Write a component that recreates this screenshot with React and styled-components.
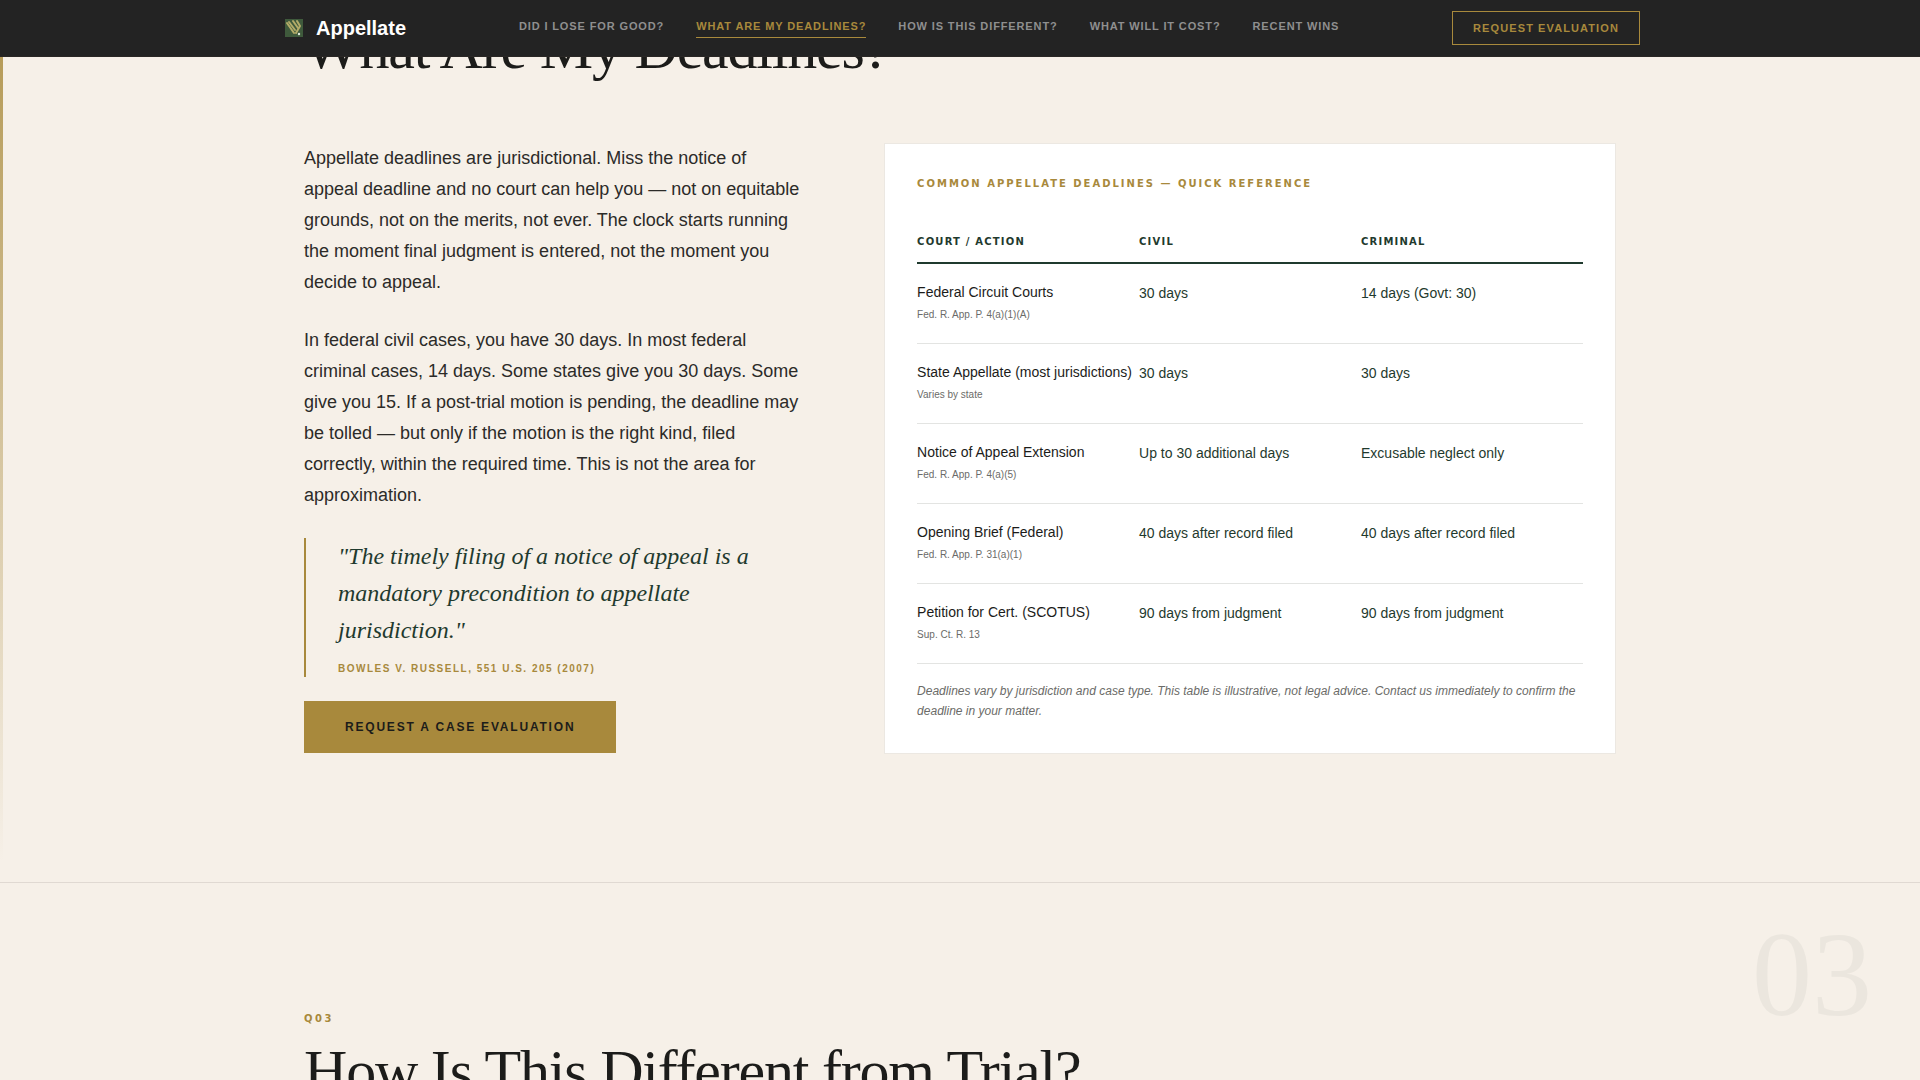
import React from "react";
import styled, { createGlobalStyle } from "styled-components";

const sans = `"Liberation Sans", Arial, sans-serif`,
	serif = `"Liberation Serif", "Times New Roman", serif`,
	label = `"DejaVu Sans", sans-serif`;

const GlobalStyle = createGlobalStyle`
	:root {
		--c_ink: #1c1c1a;
		--c_green: #1f3a2e;
		--c_gold: #a8893c;
		--c_cream: #f6f0e8;
		--c_muted: #6b6b68;
		--c_line: #e3e4e2;
	}
	* {
		box-sizing: border-box;
	}
	body {
		margin: 0;
		background-color: var(--c_cream);
		color: var(--c_ink);
		font-family: ${sans};
	}
	h2, h3, p, blockquote {
		margin: 0;
	}
	a {
		text-decoration: none;
	}
`;

const Page = styled.div`
		height: 100vh;
		overflow: hidden;
	`,
	Header = styled.header`
		position: fixed;
		top: 0;
		left: 0;
		right: 0;
		z-index: 10;
		background-color: #232323;
		border-bottom: 1px solid #2a2725;
	`,
	HeaderInner = styled.div`
		max-width: 1360px;
		height: 56px;
		margin: 0 auto;
		display: flex;
		align-items: center;
		justify-content: space-between;
	`,
	Brand = styled.a`
		display: flex;
		align-items: center;
		gap: 8px;
		color: #fff;
		font-size: 20px;
		font-weight: 700;
		svg {
			width: 28px;
			height: 28px;
		}
	`,
	Nav = styled.nav`
		display: flex;
		gap: 32px;
	`,
	NavLink = styled.a`
		color: ${({ $active }) => ($active ? "var(--c_gold)" : "#8f8f8f")};
		border-bottom: 1px solid ${({ $active }) => ($active ? "var(--c_gold)" : "transparent")};
		font-size: 11px;
		line-height: 16px;
		font-weight: 700;
		letter-spacing: 0.08em;
		text-transform: uppercase;
		padding-bottom: 3px;
	`,
	HeaderButton = styled.button`
		height: 34px;
		padding: 0 20px;
		border: 1px solid var(--c_gold);
		background: none;
		color: var(--c_gold);
		font-family: ${sans};
		font-size: 11px;
		font-weight: 700;
		letter-spacing: 0.1em;
		text-transform: uppercase;
	`,
	Section = styled.section`
		position: relative;
		border-bottom: 1px solid #e0d9d2;
	`,
	/* gold thread down the left edge of the section being read */
	Thread = styled.div`
		position: absolute;
		left: 0;
		top: 0;
		bottom: 20px;
		width: 3px;
		background: linear-gradient(to bottom, #b2964f, transparent);
	`,
	Numeral = styled.span`
		position: absolute;
		top: 24px;
		right: 48px;
		color: #ebe6de;
		font-family: ${serif};
		font-size: 120px;
		line-height: 136px;
	`,
	Container = styled.div`
		max-width: 1312px;
		margin: 0 auto;
		padding-top: ${({ $top }) => $top}px;
		padding-bottom: 128px;
	`,
	Kicker = styled.p`
		color: var(--c_gold);
		font-family: ${label};
		font-size: 10px;
		line-height: 16px;
		font-weight: 700;
		letter-spacing: 0.25em;
		margin-bottom: 12px;
	`,
	Title = styled.h2`
		font-family: ${serif};
		font-size: 60px;
		line-height: 64px;
		font-weight: 400;
		letter-spacing: -0.02em;
	`,
	Columns = styled.div`
		display: grid;
		grid-template-columns: minmax(0, 41fr) minmax(0, 60fr);
		gap: 80px;
		margin-top: 63px;
		align-items: start;
	`,
	Copy = styled.div`
		display: flex;
		flex-direction: column;
		align-items: flex-start;
	`,
	Paragraph = styled.p`
		font-size: 18px;
		line-height: 31px;
		color: #2c2b28;
		margin-bottom: 27px;
	`,
	Quote = styled.blockquote`
		align-self: stretch;
		border-left: 2px solid var(--c_gold);
		padding-left: 32px;
		margin-bottom: 24px;
		p {
			color: var(--c_green);
			font-family: ${serif};
			font-size: 24px;
			line-height: 37px;
			font-style: italic;
		}
		cite {
			display: block;
			margin-top: 12px;
			color: var(--c_gold);
			font-size: 10px;
			line-height: 16px;
			font-weight: 700;
			font-style: normal;
			letter-spacing: 0.15em;
			text-transform: uppercase;
		}
	`,
	PrimaryButton = styled.button`
		height: 52px;
		padding: 0 40px;
		border: 1px solid var(--c_gold);
		background-color: var(--c_gold);
		color: var(--c_ink);
		font-family: ${sans};
		font-size: 12px;
		font-weight: 700;
		letter-spacing: 0.15em;
		text-transform: uppercase;
	`,
	Card = styled.div`
		background-color: #fff;
		border: 1px solid #ece8e2;
		padding: 32px;
	`,
	CardTitle = styled.h3`
		color: var(--c_gold);
		font-family: ${label};
		font-size: 10px;
		line-height: 16px;
		font-weight: 700;
		letter-spacing: 0.2em;
		text-transform: uppercase;
		margin-bottom: 30px;
	`,
	Table = styled.table`
		width: 100%;
		table-layout: fixed;
		border-collapse: collapse;
		text-align: left;
	`,
	HeadCell = styled.th`
		padding: 12px 0;
		border-bottom: 2px solid var(--c_green);
		color: var(--c_green);
		font-family: ${label};
		font-size: 10px;
		line-height: 16px;
		letter-spacing: 0.12em;
		text-transform: uppercase;
	`,
	Cell = styled.td`
		height: 80px;
		padding: 18px 0 0;
		vertical-align: top;
		border-bottom: 1px solid var(--c_line);
		color: var(--c_green);
		font-size: 14px;
		line-height: 22px;
	`,
	ActionCell = styled(Cell)`
		color: var(--c_ink);
		line-height: 20px;
		white-space: nowrap;
		small {
			display: block;
			margin-top: 5px;
			color: var(--c_muted);
			font-size: 10px;
			line-height: 16px;
		}
	`,
	Note = styled.p`
		margin-top: 17px;
		color: var(--c_muted);
		font-size: 12px;
		line-height: 20px;
		font-style: italic;
	`;

const links = [
	{ name: "Did I lose for good?", url: "#q01" },
	{ name: "What are my deadlines?", url: "#q02" },
	{ name: "How is this different?", url: "#q03" },
	{ name: "What will it cost?", url: "#q04" },
	{ name: "Recent wins", url: "#wins" },
];

const deadlines = [
	{ action: "Federal Circuit Courts", rule: "Fed. R. App. P. 4(a)(1)(A)", civil: "30 days", criminal: "14 days (Govt: 30)" },
	{ action: "State Appellate (most jurisdictions)", rule: "Varies by state", civil: "30 days", criminal: "30 days" },
	{ action: "Notice of Appeal Extension", rule: "Fed. R. App. P. 4(a)(5)", civil: "Up to 30 additional days", criminal: "Excusable neglect only" },
	{ action: "Opening Brief (Federal)", rule: "Fed. R. App. P. 31(a)(1)", civil: "40 days after record filed", criminal: "40 days after record filed" },
	{ action: "Petition for Cert. (SCOTUS)", rule: "Sup. Ct. R. 13", civil: "90 days from judgment", criminal: "90 days from judgment" },
];

const Logo = () => (
	<svg viewBox="0 0 28 28" aria-hidden="true">
		<rect x="5" y="5" width="18" height="18" fill="#3f5a3c" />
		<g fill="none" stroke="#b3ab68" strokeWidth="2" strokeLinecap="round" strokeLinejoin="round">
			<path d="M7 9l7 10" />
			<path d="M9 8l6 8" />
			<path d="M13 7l5 7" />
			<path d="M17 7l3 5-4 7" />
		</g>
		<circle cx="19" cy="20" r="1.2" fill="#dfe8da" />
	</svg>
);

const App = () => {
	return (
		<Page>
			<GlobalStyle />
			<Header>
				<HeaderInner>
					<Brand href="#top">
						<Logo />
						Appellate
					</Brand>
					<Nav>
						{links.map(({ name, url }) => (
							<NavLink key={url} href={url} $active={url === "#q02"}>
								{name}
							</NavLink>
						))}
					</Nav>
					<HeaderButton type="button">Request Evaluation</HeaderButton>
				</HeaderInner>
			</Header>

			<Section id="q02">
				<Thread />
				<Container $top={16}>
					<Title>What Are My Deadlines?</Title>
					<Columns>
						<Copy>
							<Paragraph>
								Appellate deadlines are jurisdictional. Miss the notice of appeal deadline and no court can help you —
								not on equitable grounds, not on the merits, not ever. The clock starts running the moment final
								judgment is entered, not the moment you decide to appeal.
							</Paragraph>
							<Paragraph>
								In federal civil cases, you have 30 days. In most federal criminal cases, 14 days. Some states give you
								30 days. Some give you 15. If a post-trial motion is pending, the deadline may be tolled — but only if
								the motion is the right kind, filed correctly, within the required time. This is not the area for
								approximation.
							</Paragraph>
							<Quote>
								<p>"The timely filing of a notice of appeal is a mandatory precondition to appellate jurisdiction."</p>
								<cite>Bowles v. Russell, 551 U.S. 205 (2007)</cite>
							</Quote>
							<PrimaryButton type="button">Request a Case Evaluation</PrimaryButton>
						</Copy>

						<Card>
							<CardTitle>Common Appellate Deadlines — Quick Reference</CardTitle>
							<Table>
								<thead>
									<tr>
										<HeadCell>Court / Action</HeadCell>
										<HeadCell>Civil</HeadCell>
										<HeadCell>Criminal</HeadCell>
									</tr>
								</thead>
								<tbody>
									{deadlines.map(({ action, rule, civil, criminal }) => (
										<tr key={action}>
											<ActionCell>
												{action}
												<small>{rule}</small>
											</ActionCell>
											<Cell>{civil}</Cell>
											<Cell>{criminal}</Cell>
										</tr>
									))}
								</tbody>
							</Table>
							<Note>
								Deadlines vary by jurisdiction and case type. This table is illustrative, not legal advice. Contact us
								immediately to confirm the deadline in your matter.
							</Note>
						</Card>
					</Columns>
				</Container>
			</Section>

			<Section id="q03">
				<Numeral aria-hidden="true">03</Numeral>
				<Container $top={128}>
					<Kicker>Q03</Kicker>
					<Title>How Is This Different from Trial?</Title>
				</Container>
			</Section>
		</Page>
	);
};

export default App;
